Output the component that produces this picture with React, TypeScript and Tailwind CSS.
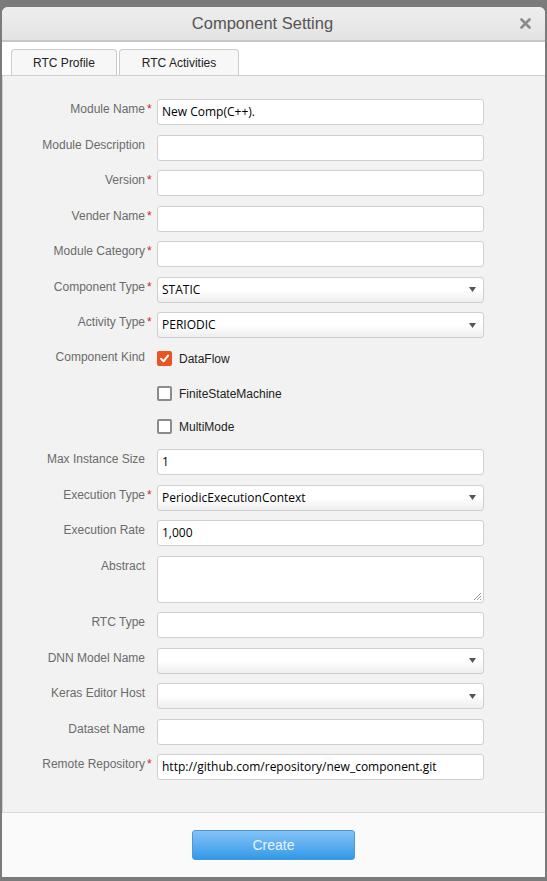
const labelFont = { fontFamily: '"Liberation Sans", Arial, sans-serif' };

function Label({ text, required }: { text: string; required?: boolean }) {
  return (
    <div className="flex shrink-0">
      <div className="w-[142px] pt-[2px] text-right text-[12px] leading-[16px] text-[#6b6b6b]">{text}</div>
      <div className="w-[12px] pl-[2px] pt-[2px] text-[12px] leading-[16px] text-[#e02020]">{required ? "*" : ""}</div>
    </div>
  );
}

function TextInput({ value }: { value?: string }) {
  return (
    <div className="flex h-[26px] w-[327px] items-center rounded-[3px] border border-[#cfcfcf] bg-white px-[4px] font-['Open_Sans',sans-serif] text-[12px] text-black">
      {value}
    </div>
  );
}

function SelectInput({ value }: { value?: string }) {
  return (
    <div className="flex h-[26px] w-[327px] items-center justify-between rounded-[3px] border border-[#cfcfcf] bg-gradient-to-b from-white via-white to-[#eeeeee] pl-[4px] pr-[7px] font-['Open_Sans',sans-serif] text-[12px] text-black">
      <span>{value}</span>
      <svg width="7" height="5" viewBox="0 0 7 5">
        <path d="M0 0 L7 0 L3.5 5 Z" fill="#555" />
      </svg>
    </div>
  );
}

function Row({ label, required, children, last }: { label: string; required?: boolean; children: React.ReactNode; last?: boolean }) {
  return (
    <div className={last ? "flex" : "mb-[9.5px] flex"}>
      <Label text={label} required={required} />
      {children}
    </div>
  );
}

function Check({ label, checked }: { label: string; checked?: boolean }) {
  return (
    <div className="flex h-[15px] items-center gap-[7px]">
      {checked ? (
        <div className="flex h-[15px] w-[15px] items-center justify-center rounded-[2px] bg-[#e95420]">
          <svg width="11" height="11" viewBox="0 0 11 11">
            <path d="M2 5.8 L4.5 8.3 L9 2.6" fill="none" stroke="white" strokeWidth="2" strokeLinecap="round" strokeLinejoin="round" />
          </svg>
        </div>
      ) : (
        <div className="h-[15px] w-[15px] rounded-[2px] border-2 border-[#8a8a8f] bg-white" />
      )}
      <span className="text-[12px] text-[#222]">{label}</span>
    </div>
  );
}

export default function App() {
  return (
    <div className="h-[881px] w-[547px] overflow-hidden bg-[#7b7b7b] px-[2px] pt-[7px]" style={labelFont}>
      <div className="flex h-[870px] flex-col overflow-hidden rounded-t-[6px] bg-[#fafafa]">
        <div className="relative flex h-[33px] shrink-0 items-center justify-center bg-gradient-to-b from-[#eeeeee] to-[#e3e3e3] pr-[22px]">
          <span className="text-[16.5px] text-[#555]">Component Setting</span>
          <svg className="absolute right-[14px] top-[11px]" width="11" height="11" viewBox="0 0 11 11">
            <path d="M1.5 1.5 L9.5 9.5 M9.5 1.5 L1.5 9.5" stroke="#8b8b8b" strokeWidth="2.6" strokeLinecap="round" />
          </svg>
        </div>
        <div className="h-[2px] shrink-0 bg-[#c6c6c6]" />
        <div className="flex shrink-0 gap-[2px] border-b border-[#cfcfcf] bg-white pl-[9px] pt-[7px]">
          <div className="flex h-[26px] w-[106px] items-center justify-center rounded-t-[4px] border border-b-0 border-[#cccccc] bg-[#f7f7f7] text-[12px] text-[#222]">
            RTC Profile
          </div>
          <div className="flex h-[26px] w-[120px] items-center justify-center rounded-t-[4px] border border-b-0 border-[#cccccc] bg-[#f7f7f7] text-[12px] text-[#222]">
            RTC Activities
          </div>
        </div>
        <div className="flex flex-1 flex-col border-l border-[#d0d0d0] bg-[#f2f2f2] pt-[23px]">
          <Row label="Module Name" required>
            <TextInput value="New Comp(C++)." />
          </Row>
          <Row label="Module Description">
            <TextInput />
          </Row>
          <Row label="Version" required>
            <TextInput />
          </Row>
          <Row label="Vender Name" required>
            <TextInput />
          </Row>
          <Row label="Module Category" required>
            <TextInput />
          </Row>
          <Row label="Component Type" required>
            <SelectInput value="STATIC" />
          </Row>
          <Row label="Activity Type" required>
            <SelectInput value="PERIODIC" />
          </Row>
          <div className="mb-[15px] flex">
            <div className="-mt-[0.5px]">
              <Label text="Component Kind" />
            </div>
            <div className="flex flex-col pt-[3.5px]">
              <Check label="DataFlow" checked />
              <div className="mt-[20px]">
                <Check label="FiniteStateMachine" />
              </div>
              <div className="mt-[18px]">
                <Check label="MultiMode" />
              </div>
            </div>
          </div>
          <Row label="Max Instance Size">
            <TextInput value="1" />
          </Row>
          <Row label="Execution Type" required>
            <SelectInput value="PeriodicExecutionContext" />
          </Row>
          <Row label="Execution Rate">
            <TextInput value="1,000" />
          </Row>
          <Row label="Abstract">
            <div className="relative h-[47px] w-[327px] rounded-[3px] border border-[#cfcfcf] bg-white">
              <svg className="absolute bottom-[1px] right-[1px]" width="10" height="10" viewBox="0 0 10 10">
                <path d="M9 2 L2 9 M9 5 L5 9 M9 8 L8 9" stroke="#9a9a9a" strokeWidth="1" />
              </svg>
            </div>
          </Row>
          <Row label="RTC Type">
            <TextInput />
          </Row>
          <Row label="DNN Model Name">
            <SelectInput />
          </Row>
          <Row label="Keras Editor Host">
            <SelectInput />
          </Row>
          <Row label="Dataset Name">
            <TextInput />
          </Row>
          <Row label="Remote Repository" required last>
            <TextInput value="http://github.com/repository/new_component.git" />
          </Row>
        </div>
        <div className="flex h-[65px] shrink-0 justify-center border-t border-[#d8d8d8] bg-[#fafafa] pt-[17px]">
          <button className="h-[30px] w-[163px] rounded-[3px] border border-[#4d97d6] bg-gradient-to-b from-[#82c2f6] to-[#2e9ae8] text-[14px] text-[#eaf3fb]">
            Create
          </button>
        </div>
      </div>
    </div>
  );
}
